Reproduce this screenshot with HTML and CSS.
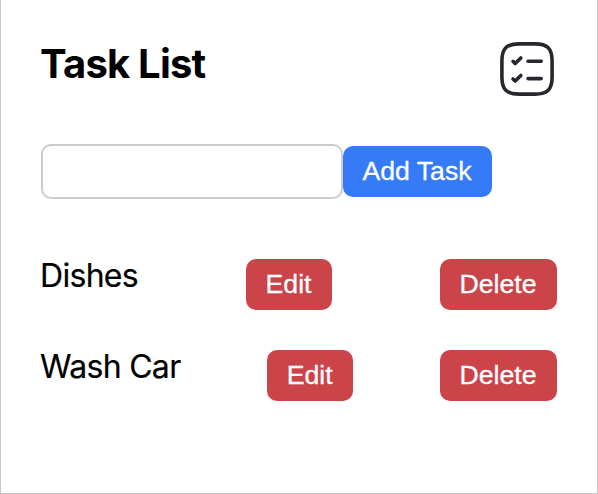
FILE: index.html
```html
<!DOCTYPE html>
<html lang="en">
<head>
<meta charset="utf-8">
<title>Task List</title>
<link rel="stylesheet" href="styles.css">
</head>
<body>
<main class="app">
  <header class="header">
    <h1 class="title">Task List</h1>
    <svg class="logo" viewBox="0 0 54 54" fill="none" stroke="#28272f" stroke-width="3.6" stroke-linecap="round" stroke-linejoin="round">
      <path d="M19 1.900H35C47.500 1.900 52.100 6.500 52.100 19V35C52.100 47.500 47.500 52.100 35 52.100H19C6.500 52.100 1.900 47.500 1.900 35V19C1.900 6.500 6.500 1.900 19 1.900Z"/>
      <path d="M13 19.300l2.200 2.200 5.600-5.600M13 36.900l2.200 2.200 5.600-5.600M28 19.200h13.200M28 36.600h13.200"/>
    </svg>
  </header>
  <form class="form">
    <input class="field" type="text" aria-label="Task">
    <button class="btn add" type="button">Add Task</button>
  </form>
  <ul class="tasks">
    <li class="task"><span class="name">Dishes</span><button class="btn danger edit">Edit</button><button class="btn danger delete">Delete</button></li>
    <li class="task"><span class="name">Wash Car</span><button class="btn danger edit">Edit</button><button class="btn danger delete">Delete</button></li>
  </ul>
</main>
</body>
</html>
```
FILE: styles.css
```css
* { box-sizing: border-box; }
body { margin: 0; background: #fff; color: #000; font-family: Inter, sans-serif; }
.app { height: 494px; padding: 42px 40px 0; border: 1px solid #c8c8c8; border-top: 0; }
.header { display: flex; justify-content: space-between; height: 102px; padding-right: 3px; }
.title { margin: 0; font-size: 40px; line-height: 44px; font-weight: 700; letter-spacing: -0.8px; text-indent: -1px; }
.logo { width: 54px; height: 54px; }
.form { display: flex; align-items: center; height: 55px; margin-bottom: 60px; }
.field { width: 302px; height: 55px; border: 2px solid #ccc; border-radius: 10px; background: #fff; }
.btn { height: 51px; padding: 0; border: 0; border-radius: 10px; color: #fff; font: 26.667px "Liberation Sans", sans-serif; -webkit-text-stroke: 0.3px #fff; text-indent: -1px; }
.add { width: 149px; background: #357af6; }
.tasks { display: grid; gap: 40px; margin: 0; padding: 0; list-style: none; }
.task { display: flex; justify-content: space-between; height: 51px; }
.name { font-size: 32px; line-height: 34px; letter-spacing: -0.7px; text-indent: -1px; -webkit-text-stroke: 0.2px #000; }
.danger { background: #ca444a; }
.edit { width: 86px; }
.delete { width: 117px; }
```
